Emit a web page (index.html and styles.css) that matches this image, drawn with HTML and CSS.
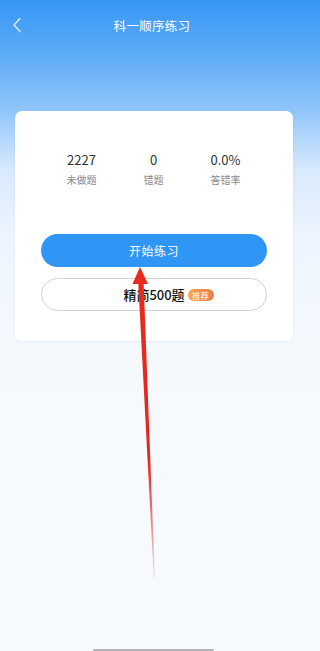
FILE: index.html
```html
<!DOCTYPE html>
<html lang="zh">
<head>
<meta charset="utf-8">
<title>科一顺序练习</title>
<link rel="stylesheet" href="styles.css">
</head>
<body>
<div class="page">
  <header class="topbar">
    <svg class="back" width="10" height="16" viewBox="0 0 10 16"><path d="M8 1.5 L2 8 L8 14.5" fill="none" stroke="#dceeff" stroke-width="1.4" stroke-linecap="round" stroke-linejoin="round"/></svg>
    <div class="title">科一顺序练习</div>
  </header>
  <main class="content">
    <section class="card">
      <div class="stats">
        <div class="stat"><div class="num">2227</div><div class="label">未做题</div></div>
        <div class="stat"><div class="num">0</div><div class="label">错题</div></div>
        <div class="stat"><div class="num">0.0%</div><div class="label">答错率</div></div>
      </div>
      <div class="actions">
        <button class="btn btn-primary">开始练习</button>
        <button class="btn btn-outline"><span class="btn-text">精简500题<span class="badge">推荐</span></span></button>
      </div>
    </section>
  </main>
  <div class="home-indicator"></div>
  <svg class="arrow" width="304" height="651" viewBox="0 0 304 651">
    <defs>
      <linearGradient id="fade" x1="0" y1="282" x2="0" y2="578" gradientUnits="userSpaceOnUse">
        <stop offset="0" stop-color="#ea2a1e" stop-opacity="1"/>
        <stop offset="0.6" stop-color="#e3261d" stop-opacity="1"/>
        <stop offset="1" stop-color="#e3261d" stop-opacity="0.15"/>
      </linearGradient>
    </defs>
    <polygon points="140,267 132.5,284 148,284" fill="#ea2a1e"/>
    <polygon points="138.2,282 143.6,282 154.8,578 153.8,578" fill="url(#fade)"/>
  </svg>
</div>
</body>
</html>
```
FILE: styles.css
```css
* { box-sizing: border-box; }
html, body { margin: 0; padding: 0; }
html, body {
  background: linear-gradient(180deg, #3497f5 0px, #63aef8 60px, #92c6fa 112px, #d9eafd 170px, #eef5fe 240px, #f5f9fe 340px, #f7fbff 651px) no-repeat;
  background-color: #f7fbff;
}
body {
  font-family: "Noto Sans CJK SC", "Noto Sans", sans-serif;
}
.page {
  position: relative;
  width: 304px;
  height: 651px;
  overflow: hidden;
  background: linear-gradient(180deg, #3497f5 0px, #63aef8 60px, #92c6fa 112px, #d9eafd 170px, #eef5fe 240px, #f5f9fe 340px, #f7fbff 651px);
}
.topbar {
  height: 50px;
  display: flex;
  align-items: center;
  justify-content: center;
  position: relative;
}
.back {
  position: absolute;
  left: 12px;
  top: 17px;
}
.title {
  color: #ffffff;
  font-size: 12.5px;
  letter-spacing: 0.3px;
}
.content {
  padding: 61px 11px 0 15px;
}
.card {
  background: #ffffff;
  border-radius: 7px;
  padding: 40px 26px 30px;
  box-shadow: 0 1px 3px rgba(120, 150, 190, 0.12);
}
.stats {
  display: flex;
  justify-content: center;
  padding-right: 1px;
}
.stat {
  width: 72px;
  text-align: center;
}
.num {
  font-size: 13px;
  line-height: 18px;
  color: #333333;
}
.label {
  margin-top: 3px;
  font-size: 10px;
  line-height: 15px;
  color: #8a8a8a;
}
.actions {
  margin-top: 47px;
  display: flex;
  flex-direction: column;
  gap: 11px;
}
.btn {
  height: 33px;
  border-radius: 17px;
  font-family: inherit;
  display: flex;
  align-items: center;
  justify-content: center;
  padding: 0;
}
.btn-primary {
  background: #2f96f5;
  border: none;
  color: #ffffff;
  font-size: 12px;
  letter-spacing: 0.5px;
}
.btn-outline {
  background: #ffffff;
  border: 1px solid #d2d2d2;
  color: #111111;
  font-size: 13px;
}
.btn-text {
  position: relative;
  font-weight: 500;
}
.badge {
  position: absolute;
  left: 100%;
  top: 50%;
  margin-left: 3px;
  margin-top: -6px;
  width: 26px;
  height: 12px;
  border-radius: 6px;
  background: linear-gradient(90deg, #f6a94f, #ef7a4c);
  color: #ffffff;
  font-size: 8.5px;
  line-height: 12px;
  font-weight: 400;
  text-align: center;
  white-space: nowrap;
}
.home-indicator {
  position: absolute;
  left: 93px;
  bottom: 0;
  width: 121px;
  height: 2px;
  background: #b4b4b4;
  border-radius: 1px;
}
.arrow {
  position: absolute;
  left: 0;
  top: 0;
  pointer-events: none;
}
```
